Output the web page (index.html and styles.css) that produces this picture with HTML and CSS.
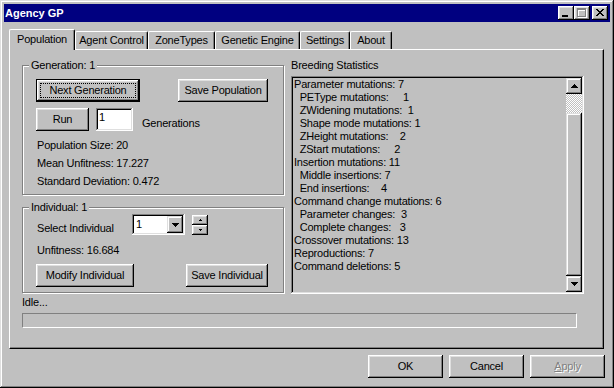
FILE: index.html
```html
<!DOCTYPE html>
<html>
<head>
<meta charset="utf-8">
<title>Agency GP</title>
<link rel="stylesheet" href="styles.css">
</head>
<body>
<div class="window">
  <div class="titlebar">
    <span class="title">Agency GP</span>
    <div class="caption-btns">
      <span class="cbtn"><svg width="16" height="14" viewBox="0 0 16 14" shape-rendering="crispEdges"><rect x="4" y="9" width="6" height="2" fill="#000"/></svg></span>
      <span class="cbtn"><svg width="16" height="14" viewBox="0 0 16 14" shape-rendering="crispEdges"><path fill="#fff" d="M4 3h9v2h-9z M4 5h1v7h-1z M12 5h1v7h-1z M4 11h9v1h-9z"/><path fill="#808080" d="M3 2h9v2h-9z M3 4h1v7h-1z M11 4h1v7h-1z M3 10h9v1h-9z"/></svg></span>
      <span class="cbtn cbtn-close"><svg width="16" height="14" viewBox="0 0 16 14" shape-rendering="crispEdges"><path fill="#000" d="M4 3h2v1h-2z M5 4h2v1h-2z M6 5h2v1h-2z M7 6h2v1h-2z M8 7h2v1h-2z M9 8h2v1h-2z M10 9h2v1h-2z M10 3h2v1h-2z M9 4h2v1h-2z M8 5h2v1h-2z M6 7h2v1h-2z M5 8h2v1h-2z M4 9h2v1h-2z"/></svg></span>
    </div>
  </div>

  <div class="tabs">
    <div class="tab tab-active tab-population">Population</div>
    <div class="tab tab-agent">Agent Control</div>
    <div class="tab tab-zone">ZoneTypes</div>
    <div class="tab tab-genetic">Genetic Engine</div>
    <div class="tab tab-settings">Settings</div>
    <div class="tab tab-about">About</div>
  </div>

  <div class="panel">
    <div class="columns">
      <div class="left-col">
        <fieldset class="group group-gen">
          <legend>Generation: 1</legend>
          <div class="group-body gen-body">
            <div class="row row-between">
              <button class="btn btn-default btn-nextgen"><span class="focus">Next Generation</span></button>
              <button class="btn btn-savepop">Save Population</button>
            </div>
            <div class="row row-run">
              <button class="btn btn-run">Run</button>
              <div class="edit">1</div>
              <span class="gen-label">Generations</span>
            </div>
            <div class="stats">
              <div>Population Size: 20</div>
              <div>Mean Unfitness: 17.227</div>
              <div>Standard Deviation: 0.472</div>
            </div>
          </div>
        </fieldset>

        <fieldset class="group group-ind">
          <legend>Individual: 1</legend>
          <div class="group-body ind-body">
            <div class="row row-select">
              <span class="select-label">Select Individual</span>
              <div class="combo">
                <span class="combo-text">1</span>
                <span class="combo-btn"><svg width="7" height="4" viewBox="0 0 7 4" shape-rendering="crispEdges"><path fill="#000" d="M0 0h7v1H0z M1 1h5v1H1z M2 2h3v1H2z M3 3h1v1H3z"/></svg></span>
              </div>
              <div class="spin">
                <span class="spin-btn"><svg width="3" height="2" viewBox="0 0 3 2" shape-rendering="crispEdges"><path fill="#000" d="M1 0h1v1H1z M0 1h3v1H0z"/></svg></span>
                <span class="spin-btn"><svg width="3" height="2" viewBox="0 0 3 2" shape-rendering="crispEdges"><path fill="#000" d="M0 0h3v1H0z M1 1h1v1H1z"/></svg></span>
              </div>
            </div>
            <div class="unfit">Unfitness: 16.684</div>
            <div class="row row-between row-ind-btns">
              <button class="btn btn-modify">Modify Individual</button>
              <button class="btn btn-saveind">Save Individual</button>
            </div>
          </div>
        </fieldset>
      </div>

      <div class="right-col">
        <div class="stats-label">Breeding Statistics</div>
        <div class="listbox">
          <div class="list-lines">
            <div class="line">Parameter mutations: 7</div>
            <div class="line">  PEType mutations:     1</div>
            <div class="line">  ZWidening mutations:  1</div>
            <div class="line">  Shape mode mutations: 1</div>
            <div class="line">  ZHeight mutations:    2</div>
            <div class="line">  ZStart mutations:     2</div>
            <div class="line">Insertion mutations: 11</div>
            <div class="line">  Middle insertions: 7</div>
            <div class="line">  End insertions:    4</div>
            <div class="line">Command change mutations: 6</div>
            <div class="line">  Parameter changes:  3</div>
            <div class="line">  Complete changes:   3</div>
            <div class="line">Crossover mutations: 13</div>
            <div class="line">Reproductions: 7</div>
            <div class="line">Command deletions: 5</div>
          </div>
          <div class="scrollbar">
            <span class="sb-btn"><svg width="7" height="4" viewBox="0 0 7 4" shape-rendering="crispEdges"><path fill="#000" d="M3 0h1v1H3z M2 1h3v1H2z M1 2h5v1H1z M0 3h7v1H0z"/></svg></span>
            <span class="sb-track"></span>
            <span class="sb-thumb"></span>
            <span class="sb-btn"><svg width="7" height="4" viewBox="0 0 7 4" shape-rendering="crispEdges"><path fill="#000" d="M0 0h7v1H0z M1 1h5v1H1z M2 2h3v1H2z M3 3h1v1H3z"/></svg></span>
          </div>
        </div>
      </div>
    </div>
    <div class="status">Idle...</div>
    <div class="progress"></div>
  </div>

  <div class="footer">
    <button class="btn btn-dlg">OK</button>
    <button class="btn btn-dlg">Cancel</button>
    <button class="btn btn-dlg btn-disabled"><span class="mnemonic">A</span>pply</button>
  </div>
</div>
</body>
</html>
```

FILE: styles.css
```css
* { box-sizing: border-box; }

html, body {
  margin: 0;
  padding: 0;
  background: #c0c0c0;
}

body {
  font-family: "Liberation Sans", Arial, sans-serif;
  font-size: 11px;
  line-height: 13px;
  letter-spacing: -0.2px;
  color: #000;
}

.window {
  width: 614px;
  height: 388px;
  padding: 4px;
  background: #c0c0c0;
  display: flex;
  flex-direction: column;
  box-shadow: inset -1px -1px #000, inset 1px 1px #dfdfdf, inset -2px -2px #808080, inset 2px 2px #fff;
}

/* Title bar */
.titlebar {
  flex: none;
  height: 18px;
  background: #000080;
  color: #fff;
  display: flex;
  align-items: center;
  padding: 0 2px 0 1px;
  font-weight: bold;
  letter-spacing: 0;
}
.title { flex: 1; }
.caption-btns { display: flex; }
.cbtn {
  display: block;
  width: 16px;
  height: 14px;
  background: #c0c0c0;
  box-shadow: inset -1px -1px #000, inset 1px 1px #fff, inset -2px -2px #808080, inset 2px 2px #dfdfdf;
}
.cbtn svg { display: block; }
.cbtn-close { margin-left: 2px; }

/* Tabs */
.tabs {
  flex: none;
  display: flex;
  align-items: flex-end;
  height: 20px;
  margin: 7px 0 0 5px;
}
.tab {
  height: 18px;
  line-height: 17px;
  text-align: center;
  white-space: nowrap;
  background: #c0c0c0;
  border-top: 1px solid #fff;
  border-left: 1px solid #fff;
  border-right: 1px solid #000;
  border-radius: 2px 2px 0 0;
  box-shadow: inset -1px 0 #808080;
}
.tab-active {
  position: relative;
  z-index: 1;
  height: 21px;
  margin-bottom: -1px;
  line-height: 18px;
  padding-bottom: 2px;
}
.tab-population { width: 66px; }
.tab-agent { width: 73px; }
.tab-zone { width: 67px; }
.tab-genetic { width: 85px; }
.tab-settings { width: 50px; }
.tab-about { width: 42px; }

/* Panel */
.panel {
  flex: none;
  height: 300px;
  margin: 0 6px 0 5px;
  padding: 9px 0 0 12px;
  border: 1px solid;
  border-color: #fff #000 #000 #fff;
  box-shadow: inset -1px -1px #808080;
}
.columns {
  display: grid;
  grid-template-columns: 262px 293px;
  column-gap: 7px;
  align-items: start;
}

/* Group boxes */
.group {
  margin: 0;
  padding: 0;
  min-width: 0;
  border: 1px solid #808080;
  box-shadow: 1px 1px 0 #fff, inset 1px 1px 0 #fff;
}
.group legend {
  margin-left: 6px;
  padding: 0 2px;
  line-height: 13px;
  background: #c0c0c0;
}
.group-ind { margin-top: 6px; }
.group-body { padding: 0 15px 0 13px; }
.gen-body { padding-top: 7px; padding-bottom: 4px; }
.ind-body { padding-top: 0; padding-bottom: 5px; }

.row { display: flex; }
.row-between { justify-content: space-between; }
.row-run { margin-top: 6px; align-items: flex-end; }
.stats { margin-top: 5px; line-height: 18px; padding-left: 1px; }

/* Buttons */
.btn {
  display: flex;
  align-items: center;
  justify-content: center;
  height: 23px;
  margin: 0;
  padding: 0;
  border: 0;
  background: #c0c0c0;
  font: inherit;
  letter-spacing: inherit;
  color: #000;
  white-space: nowrap;
  box-shadow: inset -1px -1px #000, inset 1px 1px #fff, inset -2px -2px #808080, inset 2px 2px #dfdfdf;
}
.btn-default {
  border: 1px solid #000;
  padding: 3px;
}
.btn-default .focus {
  flex: 1;
  align-self: stretch;
  display: flex;
  align-items: center;
  justify-content: center;
  border: 1px dotted #000;
}
.btn-nextgen { width: 104px; }
.btn-savepop { width: 90px; }
.btn-run { width: 53px; }
.btn-modify { width: 98px; }
.btn-saveind { width: 82px; }
.btn-dlg { width: 75px; }
.btn-disabled {
  color: #808080;
  text-shadow: 1px 1px 0 #fff;
}
.mnemonic { text-decoration: underline; }

/* Edit / combo / spin */
.edit {
  width: 37px;
  height: 23px;
  margin-left: 7px;
  padding: 3px 0 0 3px;
  background: #fff;
  box-shadow: inset -1px -1px #fff, inset 1px 1px #808080, inset -2px -2px #dfdfdf, inset 2px 2px #000;
}
.gen-label { margin-left: 9px; margin-bottom: 1px; }

.row-select { align-items: flex-end; }
.select-label { width: 96px; padding-left: 1px; }
.combo {
  display: flex;
  width: 53px;
  height: 21px;
  padding: 2px;
  background: #fff;
  box-shadow: inset -1px -1px #fff, inset 1px 1px #808080, inset -2px -2px #dfdfdf, inset 2px 2px #000;
}
.combo-text { flex: 1; padding-left: 2px; line-height: 17px; }
.combo-btn {
  width: 16px;
  height: 17px;
  display: flex;
  align-items: center;
  justify-content: center;
  background: #c0c0c0;
  box-shadow: inset -1px -1px #000, inset 1px 1px #dfdfdf, inset -2px -2px #808080, inset 2px 2px #fff;
}
.combo-btn svg, .sb-btn svg, .spin-btn svg { display: block; }
.spin {
  display: flex;
  flex-direction: column;
  width: 16px;
  margin-left: 7px;
}
.spin-btn {
  height: 10px;
  display: flex;
  align-items: center;
  justify-content: center;
  background: #c0c0c0;
  box-shadow: inset -1px -1px #000, inset 1px 1px #fff, inset -2px -2px #808080, inset 2px 2px #dfdfdf;
}
.unfit { margin-top: 9px; padding-left: 1px; }
.row-ind-btns { margin-top: 7px; }

/* Right column */
.stats-label { margin-bottom: 4px; }
.listbox {
  display: flex;
  height: 218px;
  padding: 2px;
  box-shadow: inset -1px -1px #fff, inset 1px 1px #808080, inset -2px -2px #dfdfdf, inset 2px 2px #000;
}
.list-lines {
  flex: 1;
  overflow: hidden;
  line-height: 13px;
  padding-left: 1px;
}
.line { white-space: pre; }
.scrollbar {
  flex: none;
  width: 16px;
  display: flex;
  flex-direction: column;
}
.sb-btn {
  height: 16px;
  display: flex;
  align-items: center;
  justify-content: center;
  background: #c0c0c0;
  box-shadow: inset -1px -1px #000, inset 1px 1px #dfdfdf, inset -2px -2px #808080, inset 2px 2px #fff;
}
.sb-track {
  height: 19px;
  background: repeating-conic-gradient(#c0c0c0 0 25%, #fff 0 50%) 0 0 / 2px 2px;
}
.sb-thumb {
  flex: 1;
  background: #c0c0c0;
  box-shadow: inset -1px -1px #000, inset 1px 1px #dfdfdf, inset -2px -2px #808080, inset 2px 2px #fff;
}

/* Status */
.status { margin-top: 2px; }
.progress {
  margin-top: 4px;
  width: 555px;
  height: 15px;
  border: 1px solid;
  border-color: #808080 #fff #fff #808080;
}

/* Footer */
.footer {
  display: flex;
  justify-content: flex-end;
  gap: 6px;
  margin: 6px 5px 0 0;
}
```
